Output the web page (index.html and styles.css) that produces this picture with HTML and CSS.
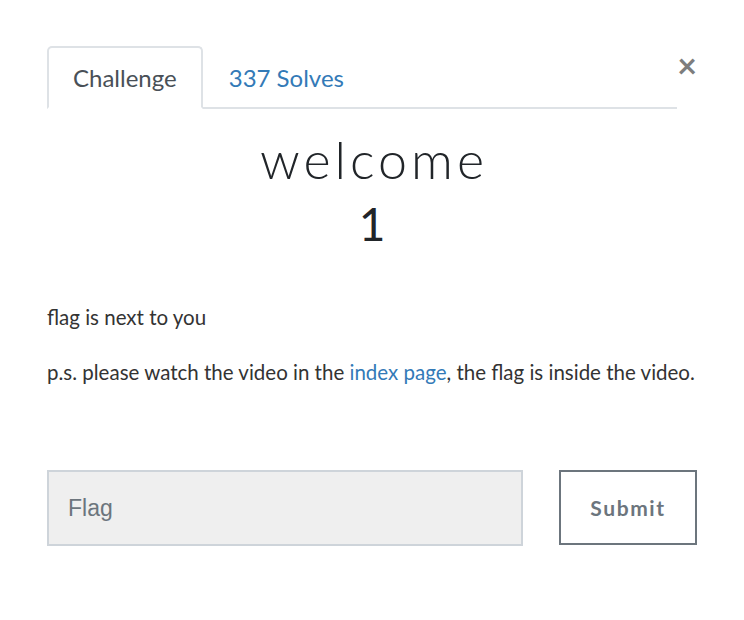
FILE: index.html
```html
<!DOCTYPE html>
<html>
<head>
<meta charset="utf-8">
<link rel="stylesheet" href="styles.css">
</head>
<body>
<div class="modal">
  <div class="header">
    <nav class="tabs">
      <span class="tab active">Challenge</span>
      <a class="tab link" href="#">337 Solves</a>
    </nav>
    <button class="close" aria-label="Close">&times;</button>
  </div>
  <h1 class="title">welcome</h1>
  <div class="value">1</div>
  <div class="desc">
    <p>flag is next to you</p>
    <p>p.s. please watch the video in the <a href="#">index page</a>, the flag is inside the video.</p>
  </div>
  <form class="submit-row">
    <input class="flag" type="text" placeholder="Flag">
    <button class="submit" type="button">Submit</button>
  </form>
</div>
</body>
</html>
```
FILE: styles.css
```css
html, body { margin: 0; padding: 0; background: #fff; }
body { font-family: Lato, "Noto Sans", sans-serif; color: #212529; }
.modal { padding: 46px 47px 0 47px; }
.header { display: flex; align-items: flex-start; }
.tabs { flex: 1; display: flex; border-bottom: 2px solid #dee2e6; }
.tab { font-size: 24px; line-height: 30px; padding: 15px 24px 14px 24px; margin-bottom: -2px; border: 2px solid transparent; border-radius: 5px 5px 0 0; text-decoration: none; }
.tab.active { color: #495057; border-color: #dee2e6 #dee2e6 #fff; background: #fff; }
.tab.link { color: #337ab7; }
.close { width: 20px; margin-left: 0; background: none; border: 0; padding: 0; font-family: Lato, sans-serif; font-size: 34px; line-height: 34px; color: #7d7d7d; margin-top: 2px; cursor: pointer; font-weight: 700; }
.title { font-family: Lato, sans-serif; font-weight: 300; font-size: 52px; letter-spacing: 4px; text-indent: 4px; text-align: center; margin: 20px 0 0 0; line-height: 60px; color: #212529; }
.value { text-align: center; font-weight: 400; font-size: 46px; line-height: 64px; margin-top: 3px; color: #212529; }
.desc { margin-top: 46px; font-size: 20.5px; line-height: 30px; color: #333; }
.desc p { margin: 0 0 25px 0; }
.desc a { color: #337ab7; text-decoration: none; }
.submit-row { display: flex; margin-top: 83px; }
.flag { width: 476px; height: 76px; box-sizing: border-box; border: 2px solid #ced4da; background: #efefef; padding: 0 19px; font-family: "Liberation Sans", Arial, sans-serif; font-size: 23px; color: #495057; }
.flag::placeholder { color: #6c757d; }
.submit { margin-left: auto; width: 138px; height: 75px; box-sizing: border-box; border: 2px solid #6c757d; background: #fff; font-family: Lato, sans-serif; font-weight: 700; font-size: 21px; letter-spacing: 1.6px; color: #6c757d; }
```
